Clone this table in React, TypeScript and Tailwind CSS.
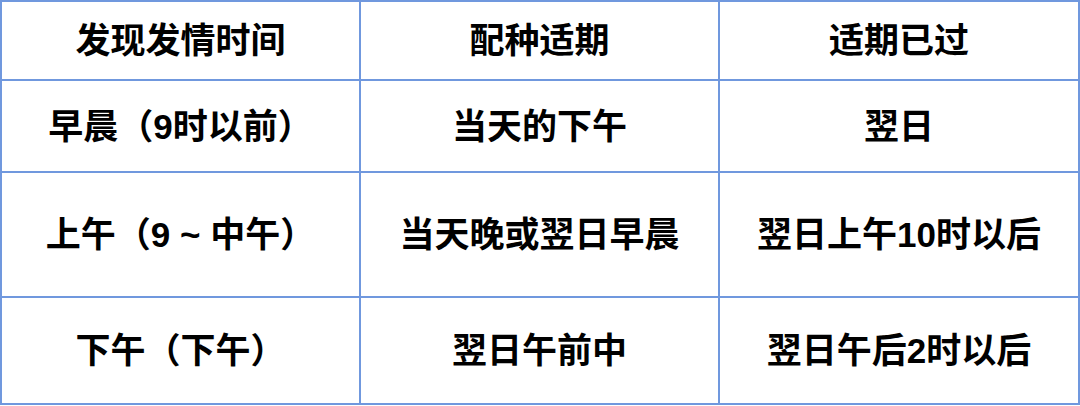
const rows = [
  ["发现发情时间", "配种适期", "适期已过"],
  ["早晨（9时以前）", "当天的下午", "翌日"],
  ["上午（9 ~ 中午）", "当天晚或翌日早晨", "翌日上午10时以后"],
  ["下午（下午）", "翌日午前中", "翌日午后2时以后"],
];

export default function App() {
  return (
    <div className="w-[1080px] h-[406px] bg-white">
      <div
        className="grid grid-cols-[357px_357px_358px] grid-rows-[77px_90px_123px_105px] gap-[2px] p-[2px] bg-[#7098de]"
        style={{ fontFamily: '"Liberation Sans", "Noto Sans CJK SC", sans-serif' }}
      >
        {rows.flat().map((t, i) => (
          <div
            key={i}
            className="bg-white flex items-center justify-center text-[35px] font-bold text-black leading-none"
          >
            {t}
          </div>
        ))}
      </div>
    </div>
  );
}
